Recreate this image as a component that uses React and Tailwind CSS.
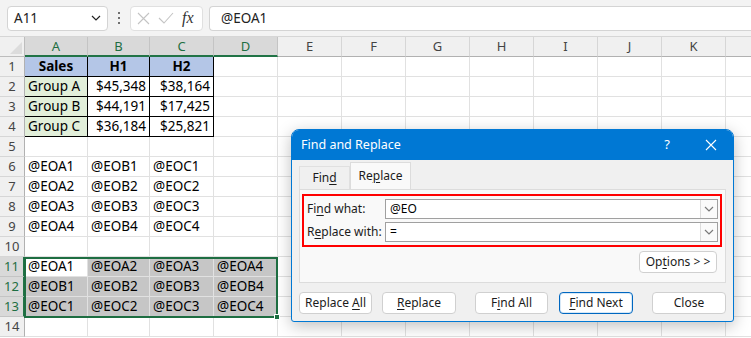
import React from 'react';

const COLS = [
  { id: 'A', w: 63 },
  { id: 'B', w: 62 },
  { id: 'C', w: 64 },
  { id: 'D', w: 64 },
  { id: 'E', w: 64 },
  { id: 'F', w: 64 },
  { id: 'G', w: 64 },
  { id: 'H', w: 64 },
  { id: 'I', w: 64 },
  { id: 'J', w: 64 },
  { id: 'K', w: 64 },
  { id: 'L', w: 64 },
];

const DATA = {
  1: ['Sales', 'H1', 'H2'],
  2: ['Group A', '$45,348', '$38,164'],
  3: ['Group B', '$44,191', '$17,425'],
  4: ['Group C', '$36,184', '$25,821'],
  6: ['@EOA1', '@EOB1', '@EOC1'],
  7: ['@EOA2', '@EOB2', '@EOC2'],
  8: ['@EOA3', '@EOB3', '@EOC3'],
  9: ['@EOA4', '@EOB4', '@EOC4'],
  11: ['@EOA1', '@EOA2', '@EOA3', '@EOA4'],
  12: ['@EOB1', '@EOB2', '@EOB3', '@EOB4'],
  13: ['@EOC1', '@EOC2', '@EOC3', '@EOC4'],
};

const font = { fontFamily: '"Noto Sans", "Open Sans", sans-serif' };

function Chevron({ className = '' }) {
  return (
    <svg width="10" height="6" viewBox="0 0 10 6" className={className}>
      <path d="M1 1 L5 5 L9 1" fill="none" stroke="currentColor" strokeWidth="1.2" />
    </svg>
  );
}

function Cell({ row, ci, w }) {
  const val = DATA[row]?.[ci] ?? '';
  const inTable = row >= 1 && row <= 4 && ci <= 2;
  const header = row === 1 && ci <= 2;
  const groupCol = row >= 2 && row <= 4 && ci === 0;
  const numeric = row >= 2 && row <= 4 && ci > 0;
  const selected = row >= 11 && row <= 13 && ci <= 3 && !(row === 11 && ci === 0);

  let cls = 'h-[20px] shrink-0 border-b border-r px-[3px] text-[13.5px] leading-[19px] text-black whitespace-nowrap overflow-hidden ';
  cls += inTable ? 'border-black ' : 'border-[#e1e1e1] ';
  if (header) cls += 'bg-[#b4c6e7] font-bold text-center ';
  else if (groupCol) cls += 'bg-[#e2efda] ';
  else if (selected) cls += 'bg-[#c6c6c6] border-[#b5b5b5] ';
  else cls += 'bg-white ';
  if (numeric) cls += 'text-right ';

  return (
    <div className={cls} style={{ width: w }}>
      {val}
    </div>
  );
}

function U({ children }) {
  return <span className="underline underline-offset-2">{children}</span>;
}

function Btn({ children, w, ml = 0, primary = false }) {
  return (
    <div
      className={`h-[22px] shrink-0 rounded-[4px] bg-white flex items-center justify-center text-[12px] text-[#1b1b1b] whitespace-pre ${
        primary ? 'border border-[#0067c0] shadow-[inset_0_0_0_1px_#d6e8f7]' : 'border border-[#d0d0d0]'
      }`}
      style={{ width: w, marginLeft: ml }}
    >
      <span>{children}</span>
    </div>
  );
}

function Dialog() {
  return (
    <div
      className="absolute left-[291px] top-[129px] w-[443px] h-[193px] rounded-t-[8px] rounded-b-[3px] bg-[#f0f0f0] border border-[#0078d4] shadow-[0_4px_16px_rgba(0,0,0,0.25)] overflow-hidden"
      style={font}
    >
      <div className="h-[30px] bg-[#0078d4] flex items-center pl-[9px] pr-[16px] text-white">
        <span className="text-[12.5px]">Find and Replace</span>
        <span className="ml-auto text-[13px] mr-[35px]">?</span>
        <svg width="12" height="12" viewBox="0 0 12 12">
          <path d="M1 1 L11 11 M11 1 L1 11" stroke="white" strokeWidth="1.1" />
        </svg>
      </div>
      <div className="px-[7px] pt-[1px]">
        <div className="flex items-end h-[28px]">
          <div className="w-[51px] h-[23px] flex items-center justify-center text-[12px] text-[#1b1b1b] border border-b-0 border-[#e0e0e0] bg-[#f0f0f0]">
            <span>
              Fin<U>d</U>
            </span>
          </div>
          <div className="w-[61px] h-[27px] flex items-center justify-center text-[12px] text-[#1b1b1b] border border-b-0 border-[#dcdcdc] bg-[#f9f9f9]">
            <span>
              Re<U>p</U>lace
            </span>
          </div>
        </div>
        <div className="h-[94px] bg-[#f9f9f9] border border-[#dcdcdc] pt-[4px] pl-[2px] pr-[3px]">
          <div className="h-[53px] border-2 border-[#ff0000] pl-[3px] pr-[2px] pt-[3px] flex flex-col gap-[3px]">
            <div className="flex items-center h-[20px]">
              <span className="w-[78px] shrink-0 text-[12px] text-[#1b1b1b] whitespace-nowrap">
                Fi<U>n</U>d what:
              </span>
              <div className="flex-1 h-[20px] bg-white border border-[#a0a0a0] flex items-center">
                <span className="pl-[4px] text-[12px] text-black">@EO</span>
                <div className="ml-auto h-[18px] w-[17px] border-l border-[#dcdcdc] bg-[#fafafa] flex items-center justify-center text-[#7a7a7a]">
                  <Chevron />
                </div>
              </div>
            </div>
            <div className="flex items-center h-[20px]">
              <span className="w-[78px] shrink-0 text-[12px] text-[#1b1b1b] whitespace-nowrap">
                R<U>e</U>place with:
              </span>
              <div className="flex-1 h-[20px] bg-white border border-[#a0a0a0] flex items-center">
                <span className="pl-[4px] text-[12px] text-black">=</span>
                <div className="ml-auto h-[18px] w-[17px] border-l border-[#dcdcdc] bg-[#fafafa] flex items-center justify-center text-[#7a7a7a]">
                  <Chevron />
                </div>
              </div>
            </div>
          </div>
          <div className="flex justify-end pr-[5px] mt-[4px]">
            <Btn w={78}>
              Op<U>t</U>ions &gt; &gt;
            </Btn>
          </div>
        </div>
        <div className="flex mt-[9px]">
          <Btn w={73}>
            Replace <U>A</U>ll
          </Btn>
          <Btn w={74} ml={10}>
            <U>R</U>eplace
          </Btn>
          <Btn w={73} ml={19}>
            F<U>i</U>nd All
          </Btn>
          <Btn w={74} ml={11} primary>
            <U>F</U>ind Next
          </Btn>
          <Btn w={74} ml={19}>
            Close
          </Btn>
        </div>
      </div>
    </div>
  );
}

export default function App() {
  const rows = Array.from({ length: 14 }, (_, i) => i + 1);
  return (
    <div className="relative w-[751px] h-[338px] overflow-hidden bg-white" style={font}>
      {/* formula bar */}
      <div className="h-[37px] bg-[#f3f3f3] border-b border-[#d6d6d6] flex items-center pl-[7px]">
        <div className="w-[101px] h-[25px] bg-white border border-[#d4d4d4] rounded-[4px] flex items-center pl-[6px] pr-[6px] text-[13.5px] text-[#222]">
          A11
          <Chevron className="ml-auto text-[#222]" />
        </div>
        <div className="w-[22px] flex flex-col items-center gap-[3px]">
          <span className="w-[2px] h-[2px] bg-[#444] rounded-full" />
          <span className="w-[2px] h-[2px] bg-[#444] rounded-full" />
          <span className="w-[2px] h-[2px] bg-[#444] rounded-full" />
        </div>
        <div className="w-[73px] h-[25px] bg-white border border-[#e0e0e0] rounded-[4px] flex items-center pl-[6px] gap-[8px]">
          <svg width="13" height="13" viewBox="0 0 13 13">
            <path d="M1 1 L12 12 M12 1 L1 12" stroke="#c4c4c4" strokeWidth="1.1" />
          </svg>
          <svg width="16" height="12" viewBox="0 0 16 12">
            <path d="M1 6 L6 11 L15 1" fill="none" stroke="#c4c4c4" strokeWidth="1.1" />
          </svg>
          <span className="text-[16px] italic text-[#333] leading-none" style={{ fontFamily: '"Liberation Serif", serif' }}>
            fx
          </span>
        </div>
        <div className="ml-[6px] flex-1 h-[25px] bg-white border border-[#d4d4d4] rounded-l-[4px] border-r-0 flex items-center pl-[11px] text-[13.5px] text-[#222]">
          @EOA1
        </div>
      </div>

      {/* column headers */}
      <div className="flex h-[20px]">
        <div className="w-[25px] shrink-0 bg-[#f0f0f0] border-r border-b border-[#bdbdbd] relative">
          <div className="absolute right-[2px] bottom-[2px] w-0 h-0 border-l-[12px] border-l-transparent border-b-[12px] border-b-[#dcdcdc]" />
        </div>
        {COLS.map((c, i) => (
          <div
            key={c.id}
            className={`shrink-0 h-[20px] border-r text-[13px] leading-[18px] text-center overflow-hidden ${
              i <= 3
                ? 'bg-[#d9d9d9] border-[#c4c4c4] border-b-2 border-b-[#217346] text-[#1e6e42]'
                : 'bg-[#f0f0f0] border-[#d6d6d6] border-b border-b-[#b1b1b1] text-[#444]'
            }`}
            style={{ width: c.w }}
          >
            {c.id === 'L' ? '' : c.id}
          </div>
        ))}
      </div>

      {/* rows */}
      {rows.map((r) => {
        const sel = r >= 11 && r <= 13;
        return (
          <div key={r} className="flex h-[20px]">
            <div
              className={`w-[25px] shrink-0 border-r border-b text-[13px] leading-[19px] text-center ${
                sel
                  ? 'bg-[#d9d9d9] border-r-[#217346] border-r-2 border-b-[#c4c4c4] text-[#1e6e42]'
                  : 'bg-[#f0f0f0] border-r-[#b1b1b1] border-b-[#d6d6d6] text-[#444]'
              }`}
            >
              {r}
            </div>
            {COLS.map((c, ci) => (
              <Cell key={c.id} row={r} ci={ci} w={c.w} />
            ))}
          </div>
        );
      })}

      {/* selection outline */}
      <div className="absolute left-[24px] top-[257px] w-[254px] h-[61px] border-2 border-[#1e6e42] pointer-events-none">
        <div className="absolute -right-[4px] -bottom-[4px] w-[6px] h-[6px] bg-[#1e6e42] border border-white" />
      </div>

      <Dialog />
    </div>
  );
}
